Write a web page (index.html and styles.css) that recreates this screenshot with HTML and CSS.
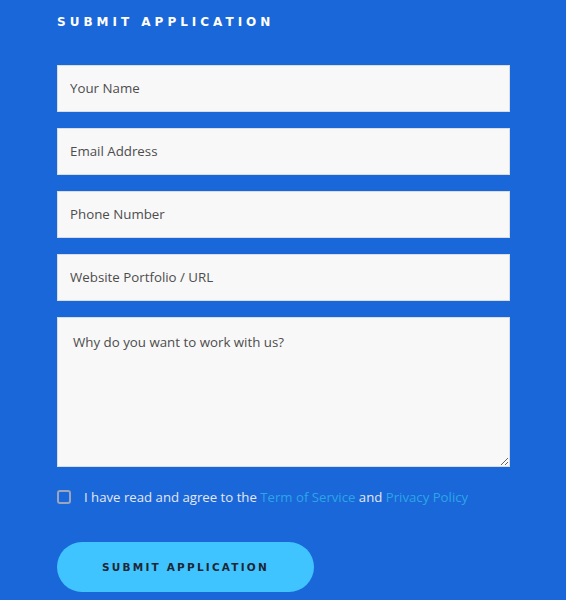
FILE: index.html
```html
<!DOCTYPE html>
<html>
<head>
<meta charset="utf-8">
<link rel="stylesheet" href="styles.css">
</head>
<body>
<section class="apply">
  <h2 class="title">SUBMIT APPLICATION</h2>
  <form class="form">
    <input class="field" type="text" placeholder="Your Name">
    <input class="field" type="email" placeholder="Email Address">
    <input class="field" type="tel" placeholder="Phone Number">
    <input class="field" type="text" placeholder="Website Portfolio / URL">
    <textarea class="field area" placeholder="Why do you want to work with us?"></textarea>
    <label class="agree">
      <span class="box"></span>
      <span>I have read and agree to the <a class="link" href="#">Term of Service</a> and <a class="link" href="#">Privacy Policy</a></span>
    </label>
    <button class="submit" type="button">SUBMIT APPLICATION</button>
  </form>
</section>
</body>
</html>
```
FILE: styles.css
```css
html, body {
  margin: 0;
  padding: 0;
  background: #1a67da;
}
.apply {
  padding: 14px 56px 0 57px;
  font-family: "Open Sans", "Liberation Sans", sans-serif;
}
.title {
  margin: 0 0 35px 0;
  color: #ffffff;
  font-family: "DejaVu Sans", sans-serif;
  font-size: 12px;
  font-weight: 600;
  letter-spacing: 4px;
  line-height: 16px;
}
.form {
  display: flex;
  flex-direction: column;
  gap: 16px;
  width: 453px;
}
.field {
  box-sizing: border-box;
  height: 47px;
  width: 100%;
  margin: 0;
  border: 1px solid #d9dde3;
  background: #f8f8f8;
  padding: 0 12px 2px 12px;
  font-family: "Open Sans", sans-serif;
  font-size: 13.3px;
  color: #444;
  outline: none;
}
.field::placeholder {
  color: #4d4d4d;
}
.area {
  height: 150px;
  padding: 15px 15px;
  resize: vertical;
  display: block;
}
.agree {
  display: flex;
  align-items: center;
  gap: 13px;
  margin-top: 5px;
  color: #e4e8f0;
  font-size: 13.2px;
}
.box {
  box-sizing: border-box;
  width: 14px;
  height: 14px;
  border: 2px solid #9aa6bd;
  border-radius: 3px;
  flex: none;
}
.link {
  color: #2aa6e6;
  text-decoration: none;
}
.submit {
  margin-top: 20px;
  width: 257px;
  height: 50px;
  border: none;
  border-radius: 25px;
  background: #40c4ff;
  color: #1f2733;
  font-family: "DejaVu Sans", sans-serif;
  font-size: 10.5px;
  font-weight: 600;
  letter-spacing: 2.2px;
  cursor: pointer;
}
```
